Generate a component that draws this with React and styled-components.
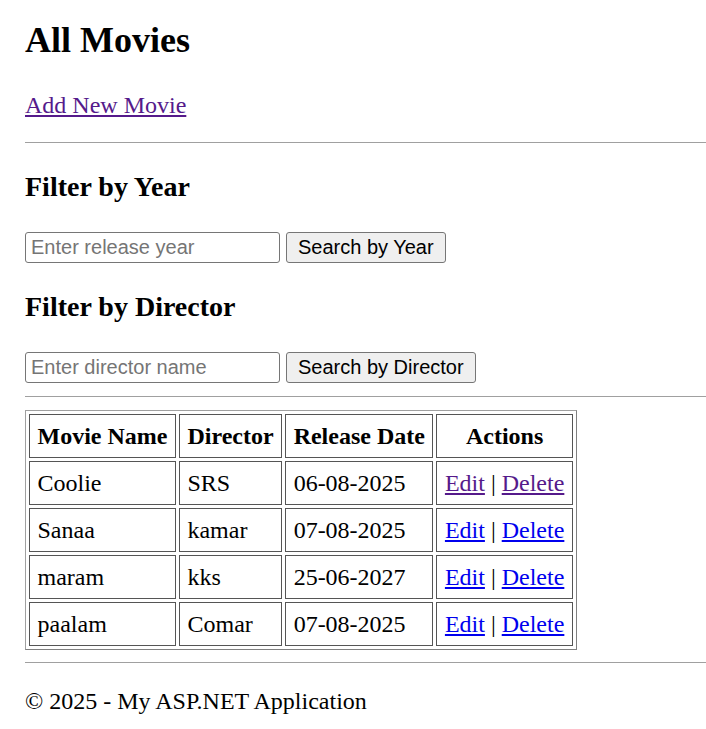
import React from 'react'
import styled, { createGlobalStyle } from 'styled-components'

const GlobalStyle = createGlobalStyle`
  html, body {
    margin: 0;
    padding: 0;
    background: #fff;
  }
  body {
    font-family: "Liberation Serif", "Times New Roman", serif;
    font-size: 24px;
    color: #000;
  }
`

const movies = [
  { name: 'Coolie', director: 'SRS', date: '06-08-2025', visited: true },
  { name: 'Sanaa', director: 'kamar', date: '07-08-2025' },
  { name: 'maram', director: 'kks', date: '25-06-2027' },
  { name: 'paalam', director: 'Comar', date: '07-08-2025' },
]

function App() {
  return (
    <>
      <GlobalStyle />
      <Page>
        <Title>All Movies</Title>
        <Para>
          <Link href="#" $visited>Add New Movie</Link>
        </Para>
        <Divider $top={23} $bottom={28} />

        <SubTitle>Filter by Year</SubTitle>
        <SearchRow>
          <SearchInput placeholder="Enter release year" />
          <SearchButton>Search by Year</SearchButton>
        </SearchRow>

        <SubTitle>Filter by Director</SubTitle>
        <SearchRow>
          <SearchInput placeholder="Enter director name" />
          <SearchButton>Search by Director</SearchButton>
        </SearchRow>
        <Divider $top={13} $bottom={13} />

        <MovieTable>
          <thead>
            <tr>
              <Th>Movie Name</Th>
              <Th>Director</Th>
              <Th>Release Date</Th>
              <Th>Actions</Th>
            </tr>
          </thead>
          <tbody>
            {movies.map((m) => (
              <tr key={m.name}>
                <Td>{m.name}</Td>
                <Td>{m.director}</Td>
                <Td>{m.date}</Td>
                <Td>
                  <Link href="#" $visited={m.visited}>Edit</Link> |{' '}
                  <Link href="#" $visited={m.visited}>Delete</Link>
                </Td>
              </tr>
            ))}
          </tbody>
        </MovieTable>

        <Divider $top={12} $bottom={24} />
        <Footer>© 2025 - My ASP.NET Application</Footer>
      </Page>
    </>
  )
}

export default App

const Page = styled.div`
  padding: 20px 0 0 25px;
`

const Title = styled.h1`
  margin: 0 0 31px;
  font-size: 36px;
  line-height: 40px;
  font-weight: bold;
`

const Para = styled.p`
  margin: 0;
  line-height: 28px;
`

const Link = styled.a`
  color: ${(p) => (p.$visited ? '#551a8b' : '#0000ee')};
  text-decoration: underline;
`

const Divider = styled.hr`
  margin: ${(p) => p.$top}px 0 ${(p) => p.$bottom}px;
  border: none;
  border-top: 1px solid #a0a0a0;
  height: 0;
`

const SubTitle = styled.h3`
  margin: 0 0 29px;
  font-size: 28px;
  line-height: 32px;
  font-weight: bold;

  & + div + & {
    margin-top: 28px;
  }
`

const SearchRow = styled.div`
  display: flex;
  gap: 6px;
  height: 31px;
`

const SearchInput = styled.input`
  box-sizing: border-box;
  width: 255px;
  height: 31px;
  padding: 0 5px;
  border: 1px solid #767676;
  border-radius: 3px;
  font-family: "Liberation Sans", Arial, sans-serif;
  font-size: 20px;
  color: #000;
  background: #fff;

  &::placeholder {
    color: #757575;
  }
`

const SearchButton = styled.button`
  box-sizing: border-box;
  height: 31px;
  padding: 0 11px;
  border: 1px solid #767676;
  border-radius: 3px;
  background: #efefef;
  font-family: "Liberation Sans", Arial, sans-serif;
  font-size: 20px;
  color: #000;
`

const MovieTable = styled.table`
  border: 1px solid #808080;
  border-top-color: #a0a0a0;
  border-left-color: #a0a0a0;
  border-spacing: 3px;
  font-size: 24px;
`

const Th = styled.th`
  border: 1px solid #555;
  padding: 7px 7.5px;
  line-height: 28px;
  font-weight: bold;
  text-align: center;
  white-space: nowrap;
`

const Td = styled.td`
  border: 1px solid #555;
  padding: 7px 7.5px;
  line-height: 28px;
  white-space: nowrap;
`

const Footer = styled.p`
  margin: 0;
  line-height: 28px;
`
